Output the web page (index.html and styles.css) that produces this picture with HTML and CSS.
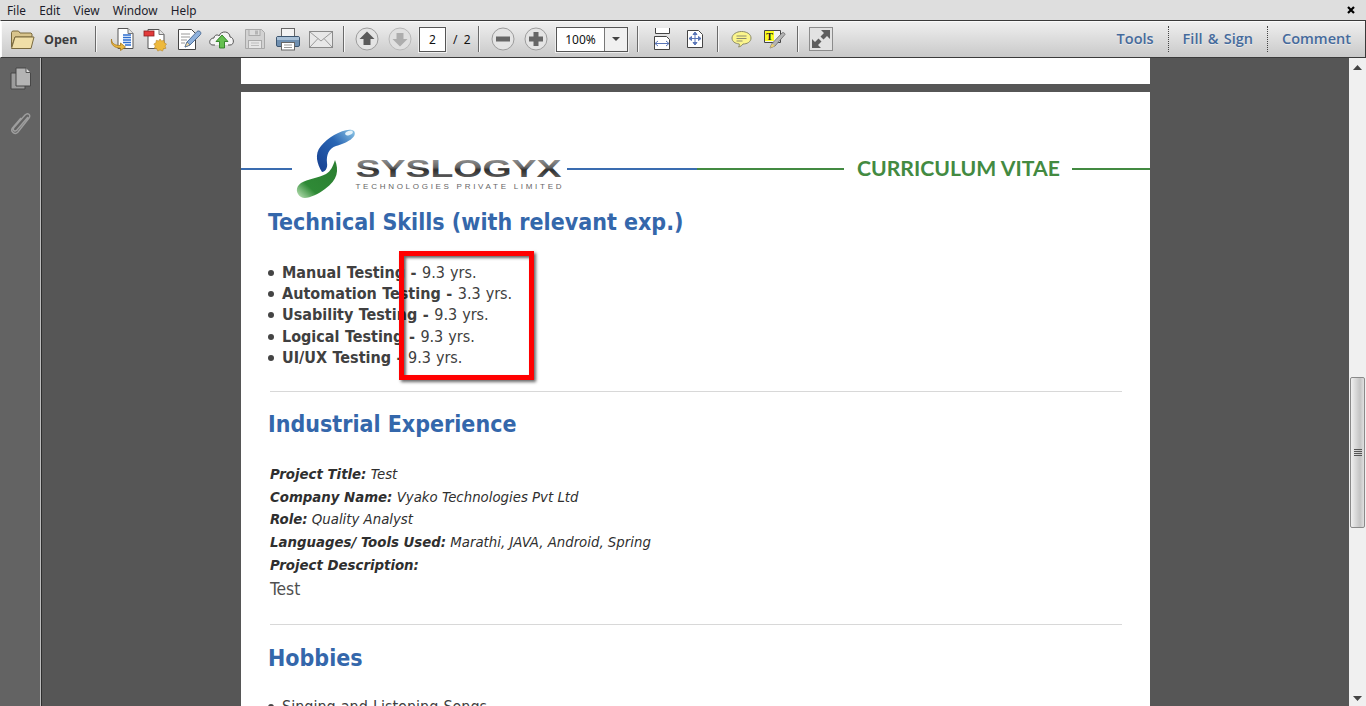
FILE: index.html
```html
<!DOCTYPE html>
<html lang="en">
<head>
<meta charset="utf-8">
<title>Curriculum Vitae</title>
<link rel="stylesheet" href="styles.css">
</head>
<body>
<div class="app">
  <nav class="menubar">
    <span class="menu-item">File</span><span class="menu-item">Edit</span><span class="menu-item">View</span><span class="menu-item">Window</span><span class="menu-item">Help</span>
    <svg class="close-x" viewBox="0 0 8 8" width="8" height="8"><path d="M1 1l6 6M7 1L1 7" stroke="#000" stroke-width="2.2"/></svg>
  </nav>
  <header class="toolbar">
    <div class="tools">
      <svg class="ico folder" width="25" height="21" viewBox="0 0 25 21"><path d="M1.500 18V3.500l1-1.500h6l1.500 2h11l1 1v3H5z" fill="#d8c48c" stroke="#7a6a3e"/><path d="M1.500 19.500L5 8h19l-3 11.500z" fill="#f0dfa8" stroke="#7a6a3e"/></svg>
      <span class="open-label">Open</span>
      <i class="sep sep-open"></i>
      <span class="btn"><svg width="26" height="24" viewBox="0 0 26 24"><path d="M8 1.500h10l5 5v15H8z" fill="#fff" stroke="#555"/><path d="M18 1.500v5h5" fill="#e4e4e4" stroke="#777"/><path d="M13 8h8M13 10.500h8M13 13h8M13 15.500h8M15 18h6" stroke="#2f6fd0" stroke-width="1.300"/><path d="M1.500 12c0 5 4 6.500 9 6.500v-2.500l5 4-5 3.500V21c-6 0-10-3-9-9z" fill="#eab840" stroke="#a9781c" stroke-width=".8"/></svg></span>
      <span class="btn"><svg width="26" height="25" viewBox="0 0 26 25"><path d="M5 2.500h11l5 5v14H5z" fill="#fff" stroke="#555"/><path d="M16 2.500v5h5" fill="#e4e4e4" stroke="#777"/><rect x="1" y="4" width="10" height="5" fill="#e23a3a" stroke="#8c1e1e" stroke-width=".8"/><path d="M17 12l1.500 2 2.500-.7.300 2.500 2.200 1.200-1.500 2 1 2.300-2.500.5-1 2.300-2.500-1.200-2.200 1.200-1-2.300-2.500-.5 1-2.300-1.500-2 2.200-1.200.3-2.500 2.500.7z" fill="#eeb93c" stroke="#b8862a" stroke-width=".6"/></svg></span>
      <span class="btn"><svg width="26" height="24" viewBox="0 0 26 24"><path d="M2.500 2.500h13l4 4v16h-17z" fill="#fff" stroke="#444"/><path d="M5 7h9M5 10h9M5 13h6M5 16h4" stroke="#999"/><path d="M9 20l2-5L21 4.500c1-1 3-.5 3.500.5s.5 2-.5 3L14 18z" fill="#8fb1dc" stroke="#44648e" stroke-width=".9"/><path d="M9 20l2-5 3 3z" fill="#f1d9a4" stroke="#44648e" stroke-width=".6"/></svg></span>
      <span class="btn"><svg width="26" height="22" viewBox="0 0 26 22"><path d="M6 17H4c-5 0-4-7 1-7 0-3 4-4 5-2 2-6 11-5 11 1 4 0 5 8 0 8h-2" fill="#f4f4f4" stroke="#555"/><path d="M13 7l6 6.500h-3.500V20h-5v-6.500H7z" fill="#65c050" stroke="#2c7d24" stroke-width=".9"/></svg></span>
      <span class="btn"><svg width="22" height="22" viewBox="0 0 22 22"><path d="M1.500 1.500h16l3 3v16h-19z" fill="#d2d2d2" stroke="#a8a8a8"/><rect x="5" y="1.500" width="11" height="6" fill="#dcdcdc" stroke="#aaa"/><rect x="11" y="2.500" width="3" height="4" fill="#b5b5b5"/><rect x="4.500" y="12.500" width="13" height="8" fill="#e6e6e6" stroke="#aaa"/><path d="M7 15h8M7 17.500h8" stroke="#bdbdbd"/></svg></span>
      <span class="btn"><svg width="24" height="24" viewBox="0 0 24 24"><rect x="5.500" y="1.500" width="13" height="8" fill="#f3f3f3" stroke="#666"/><path d="M2 9.500h20q1.500 0 1.500 1.500v7q0 1.500-1.500 1.500H2Q.5 19.500.5 18v-7Q.5 9.500 2 9.500z" fill="#6f8fb0" stroke="#3d5670"/><rect x="1" y="10" width="22" height="3" fill="#a9c0d6"/><rect x="5.500" y="15.500" width="13" height="7.500" fill="#fff" stroke="#666"/><path d="M8 18h8M8 20.500h8" stroke="#999"/></svg></span>
      <span class="btn"><svg width="24" height="17" viewBox="0 0 24 17"><rect x=".5" y=".5" width="23" height="16" fill="#e8e8e8" stroke="#8a8a8a"/><path d="M1 1l11 9 11-9M1 16l8-8.500M23 16l-8-8.500" fill="none" stroke="#9a9a9a"/></svg></span>
      <i class="sep sep-nav"></i>
      <span class="btn"><svg width="24" height="24" viewBox="0 0 24 24"><circle cx="12" cy="12" r="11" fill="#e4e4e4" stroke="#9c9c9c"/><path d="M12 4.500l7.500 7.500H15.500v6h-7v-6H4.500z" fill="#5a5a5a"/></svg></span>
      <span class="btn"><svg width="24" height="24" viewBox="0 0 24 24"><circle cx="12" cy="12" r="11" fill="#e0e0e0" stroke="#b8b8b8"/><path d="M12 19.500L4.500 12H8.500V6h7v6h4z" fill="#adadad"/></svg></span>
      <span class="page-input">2</span>
      <span class="page-total">/&nbsp; 2</span>
      <i class="sep sep-page"></i>
      <span class="btn"><svg width="24" height="24" viewBox="0 0 24 24"><circle cx="12" cy="12" r="11" fill="#e4e4e4" stroke="#9c9c9c"/><rect x="5" y="9.500" width="14" height="5" fill="#666"/></svg></span>
      <span class="btn"><svg width="24" height="24" viewBox="0 0 24 24"><circle cx="12" cy="12" r="11" fill="#e4e4e4" stroke="#9c9c9c"/><path d="M9.500 5h5v4.500H19v5h-4.500V19h-5v-4.500H5v-5h4.500z" fill="#666"/></svg></span>
      <span class="zoom-box"><span class="zoom-val">100%</span><span class="zoom-arrow"><svg width="8" height="4" viewBox="0 0 8 4"><path d="M0 0h8L4 4z" fill="#444"/></svg></span></span>
      <i class="sep sep-zoom"></i>
      <span class="btn"><svg width="18" height="22" viewBox="0 0 18 22"><path d="M2.500 0v5.500h14V0" fill="#fff" stroke="#444"/><path d="M1.500 8.500h12l3 3v10h-15z" fill="#fff" stroke="#444"/><path d="M2 15.500h14M2 15.500l3-2.500M2 15.500l3 2.500M16 15.500l-3-2.500M16 15.500l-3 2.500" stroke="#5a76b8" fill="none"/></svg></span>
      <span class="btn"><svg width="18" height="20" viewBox="0 0 18 20"><path d="M1.500 1.500h11l4 4v13h-15z" fill="#fff" stroke="#444"/><path d="M9 3v13M3 9.500h12M9 3L7 5.500h4zM9 16l-2-2.500h4zM3 9.500L5.500 7.500v4zM15 9.500L12.500 7.500v4z" stroke="#5a76b8" fill="#5a76b8"/></svg></span>
      <i class="sep sep-fit"></i>
      <span class="btn"><svg width="21" height="19" viewBox="0 0 21 19"><path d="M10.500 1.500c5 0 9.500 2.500 9.500 6.500s-4 6-8 6c-1 1.500-2.500 2.500-4.500 3 .8-1 1-2 .8-3C4 13.500 1 11.500 1 8s4.500-6.500 9.500-6.500z" fill="#fbf58c" stroke="#8a8a6a"/><path d="M5.500 6h10M5.500 8.500h10M5.500 11h6" stroke="#8d8d70"/></svg></span>
      <span class="btn"><svg width="22" height="20" viewBox="0 0 22 20"><path d="M.5 1.500h16v12H.5z" fill="#f3f3f3" stroke="#444"/><rect x="1" y="2" width="9" height="10" fill="#fcfc20"/><text class="t-glyph" x="5.500" y="10.500">T</text><path d="M6 19l2-4.500L18 4c1-1 3 0 3 1.500L11 17z" fill="#b4b4b4" stroke="#666" stroke-width=".8"/><path d="M6 19l2-4.500 3 2.500z" fill="#e9cd72"/></svg></span>
      <i class="sep sep-last"></i>
      <span class="expand"><svg width="24" height="24" viewBox="0 0 24 24"><rect x=".5" y=".5" width="23" height="23" fill="#e2e2e2" stroke="#8c8c8c" stroke-width="1"/><path d="M12 3h9v9l-3-3-3.500 3.500-3-3L15 6zM12 21H3v-9l3 3 3.500-3.500 3 3L9 18z" fill="#5e5e5e"/></svg></span>
    </div>
    <div class="panes">
      <span class="pane">Tools</span><span class="pane pane-fill">Fill &amp; Sign</span><span class="pane">Comment</span>
    </div>
  </header>
  <div class="work">
    <aside class="side">
      <svg width="22" height="24" viewBox="0 0 22 24"><path d="M1 6h14v16H1z" fill="#9c9c9c" stroke="#474747"/><path d="M6 1h10l4.500 4.500V19H6z" fill="#b4b4b4" stroke="#474747"/><path d="M16 1v4.500h4.500" fill="#ddd" stroke="#555"/></svg>
      <svg class="clip" width="22" height="24" viewBox="0 0 22 24"><path d="M18 5L7 18c-2 2.500-5 0-3-2.500L15 3c3-3 6 0 4 3L8 20c-3 3.500-8-.5-5.500-4L11 6" fill="none" stroke="#9e9e9e" stroke-width="1.400"/></svg>
    </aside>
    <main class="canvas">
      <div class="sheet sheet-prev"></div>
      <article class="sheet sheet-cur">
        <div class="letterhead">
          <i class="rule rule-blue rule-a"></i>
          <svg class="logo" width="275" height="80" viewBox="0 0 275 80">
            <defs>
              <linearGradient id="lb" x1="0" y1="1" x2="1" y2="0"><stop offset="0" stop-color="#163e8f"/><stop offset=".6" stop-color="#2a66b4"/><stop offset="1" stop-color="#8cc6e6"/></linearGradient>
              <linearGradient id="lg" x1="0" y1="1" x2="1" y2="0"><stop offset="0" stop-color="#c2e6bc"/><stop offset=".3" stop-color="#2f8a36"/><stop offset="1" stop-color="#2a7d30"/></linearGradient>
              <linearGradient id="ls" x1="0" y1="0" x2="0" y2="1"><stop offset="0" stop-color="#a8a8a8"/><stop offset=".45" stop-color="#666"/><stop offset=".55" stop-color="#2e2e2e"/><stop offset="1" stop-color="#777"/></linearGradient>
            </defs>
            <path d="M62 9C66 15 55 21 44 24C37 26 34 33 35 41C36 46 33 50 30 50C25 42 22 32 29 24C36 15 55 4 62 9z" fill="url(#lb)"/>
            <ellipse cx="57" cy="11" rx="4" ry="2" fill="#e4f2fa" transform="rotate(-20 57 11)"/>
            <path d="M43 38C47 48 46 58 33 67C25 73 14 78 9 75C4 72 3 65 9 61C15 57 27 56 34 52C39 49 41 44 43 38z" fill="url(#lg)"/>
            <text class="logo-name" x="63.500" y="55" textLength="206" lengthAdjust="spacingAndGlyphs" fill="url(#ls)">SYSLOGYX</text>
            <text class="logo-sub" x="63.500" y="67" textLength="206">TECHNOLOGIES PRIVATE LIMITED</text>
          </svg>
          <i class="rule rule-blue rule-b"></i>
          <i class="rule rule-green rule-c"></i>
          <span class="cv-title">CURRICULUM VITAE</span>
          <i class="rule rule-green rule-d"></i>
        </div>
        <h2 class="h-first">Technical Skills (with relevant exp.)</h2>
        <ul class="skills">
          <li><b>Manual Testing - </b>9.3 yrs.</li>
          <li><b>Automation Testing - </b>3.3 yrs.</li>
          <li><b>Usability Testing - </b>9.3 yrs.</li>
          <li><b>Logical Testing - </b>9.3 yrs.</li>
          <li><b>UI/UX Testing - </b>9.3 yrs.</li>
        </ul>
        <hr class="divider hr-one">
        <h2>Industrial Experience</h2>
        <div class="project">
          <p><b>Project Title:</b> Test</p>
          <p><b>Company Name:</b> Vyako Technologies Pvt Ltd</p>
          <p><b>Role:</b> Quality Analyst</p>
          <p><b>Languages/ Tools Used:</b> Marathi, JAVA, Android, Spring</p>
          <p><b>Project Description:</b></p>
        </div>
        <p class="desc">Test</p>
        <hr class="divider hr-two">
        <h2>Hobbies</h2>
        <ul class="skills hobbies">
          <li>Singing and Listening Songs</li>
        </ul>
        <div class="redbox"></div>
      </article>
    </main>
    <div class="scroll">
      <svg class="arrow" width="9" height="5" viewBox="0 0 9 5"><path d="M0 5L4.500 0 9 5z" fill="#444"/></svg>
      <div class="thumb"><i></i><i></i><i></i><i></i></div>
      <svg class="arrow arrow-down" width="9" height="5" viewBox="0 0 9 5"><path d="M0 0l4.500 5L9 0z" fill="#444"/></svg>
    </div>
  </div>
</div>
</body>
</html>
```
FILE: styles.css
```css
* { box-sizing: border-box; }
html, body { margin: 0; height: 100%; overflow: hidden; }
body { font-family: "DejaVu Sans", sans-serif; background: #dcdcdc; }
.app { width: 1366px; height: 706px; display: flex; flex-direction: column; }

.menubar { height: 20px; flex: none; display: flex; align-items: center; padding-left: 7px; gap: 13.300px; background: #dedede; font: 11.800px "Noto Sans", sans-serif; color: #1c1c2a; }
.close-x { margin-left: auto; margin-right: 11px; }

.toolbar { height: 38px; flex: none; display: flex; justify-content: space-between; align-items: center; border: 1px solid #3a3a3a; border-left: 1px solid #fff; box-shadow: inset 1px 1px 0 #fafafa; background: linear-gradient(#f0f0f0, #c9c9c9); }
.tools { display: flex; align-items: center; padding-left: 9px; }
.ico { display: block; }
.open-label { margin-left: 9px; font: 700 12.500px "Open Sans", sans-serif; color: #3c3c3c; width: 33px; }
.sep { width: 2px; height: 26px; margin: 0 7px; background: linear-gradient(90deg, #6a6a6a 50%, #f6f6f6 50%); display: block; }
.sep-open { margin-left: 18px; margin-right: 9px; }
.sep-nav { margin-left: 6px; margin-right: 5px; }
.btn { width: 33px; display: flex; justify-content: center; align-items: center; }
.page-input { width: 27px; height: 25px; margin-left: 3px; display: flex; align-items: center; justify-content: center; background: #fff; border: 1px solid #555; box-shadow: 0 0 0 1px #eee; font: 12px "Noto Sans", sans-serif; color: #111; }
.page-total { margin-left: 7px; width: 25px; font: 12px "Noto Sans", sans-serif; color: #111; }
.sep-page { margin-left: 0; margin-right: 6px; }
.zoom-box { margin-left: 4px; width: 72px; height: 25px; display: flex; background: #fff; border: 1px solid #555; box-shadow: 0 0 0 1px #eee; font: 12px "Noto Sans", sans-serif; color: #111; }
.zoom-val { flex: 1; display: flex; align-items: center; justify-content: center; border-right: 1px solid #777; }
.zoom-arrow { width: 22px; display: flex; align-items: center; justify-content: center; background: #f0f0f0; }
.sep-zoom { margin-left: 9px; margin-right: 6px; }
.sep-fit { margin-left: 6px; margin-right: 6px; }
.sep-last { margin-left: 6px; margin-right: 7px; }
.expand { margin-left: 3px; display: flex; }
.t-glyph { font: 700 10px "Liberation Serif", serif; text-anchor: middle; fill: #222; }

.panes { display: flex; align-items: center; height: 100%; }
.pane { height: 26px; padding: 0 14px 2px; display: flex; align-items: center; font: 600 14.500px "Open Sans", sans-serif; color: #456a9c; text-shadow: 0 1px 0 rgba(255,255,255,.5); border-left: 1px dotted #444; }
.pane:first-child { border-left: 0; }
.pane-fill { word-spacing: 1.500px; }

.work { flex: 1; display: flex; min-height: 0; }
.side { width: 42px; flex: none; display: flex; flex-direction: column; align-items: center; gap: 21px; padding-top: 9px; background: #636363; border-right: 1px solid #2e2e2e; box-shadow: inset -1px 0 0 #bdbdbd; }
.canvas { flex: 1; min-width: 0; display: flex; flex-direction: column; align-items: center; gap: 8px; overflow: hidden; background: #565656; }
.sheet { width: 909px; flex: none; background: #fff; }
.sheet-prev { height: 26px; }
.sheet-cur { position: relative; height: 800px; padding: 0 28px 0 27px; color: #404040; font-family: "DejaVu Sans Condensed", "DejaVu Sans", sans-serif; font-stretch: condensed; }

.letterhead { height: 118px; margin: 0 -28px 0 -27px; padding-top: 30px; display: flex; align-items: flex-start; }
.logo { flex: none; }
.rule { display: block; height: 2px; margin-top: 46px; flex: none; }
.rule-blue { background: #3a6cb0; }
.rule-green { background: #438a41; }
.rule-a { width: 51px; }
.rule-b { width: 130px; }
.rule-c { width: 147px; }
.rule-d { width: 78px; }
.logo-name { font: 700 24px "Liberation Sans", sans-serif; }
.logo-sub { font: 8px "Liberation Sans", sans-serif; fill: #666; }
.cv-title { margin: 34px 13px 0; width: 202px; font: 700 21.200px/24px Lato, sans-serif; font-stretch: normal; color: #438a41; white-space: nowrap; }

h2 { margin: 0; font-weight: 700; font-size: 23px; line-height: 28px; color: #3467ab; }
.h-first { margin-top: -2px; }
.skills { margin: 26px 0 0; padding: 0; list-style: none; font-size: 16px; line-height: 21.200px; word-spacing: .5px; }
.skills li::before { content: ""; display: inline-block; width: 6px; height: 6px; margin-right: 8px; vertical-align: 2px; border-radius: 50%; background: #444; }
.divider { height: 1px; border: 0; margin: 0 0 0 2px; background: #d8d8d8; }
.hr-one { margin-top: 23px; margin-bottom: 18px; }
.project { margin-top: 24.700px; padding-left: 2px; font-size: 14.800px; line-height: 22.800px; font-style: italic; color: #2f2f2f; }
.project p { margin: 0; }
.desc { margin: 0 0 0 2px; font-size: 17.300px; line-height: 24px; color: #505050; }
.hr-two { margin-top: 23px; margin-bottom: 19px; }
.hobbies { margin-top: 24px; }

.redbox { position: absolute; left: 158px; top: 159px; width: 135px; height: 129px; border: 5px solid #f00; box-shadow: 2px 2px 3px rgba(0,0,0,.6), inset 2px 2px 3px rgba(0,0,0,.6); }

.scroll { width: 17px; flex: none; position: relative; background: #f0f0f0; display: flex; flex-direction: column; align-items: center; padding-top: 7px; }
.arrow { display: block; }
.arrow-down { position: absolute; bottom: 5px; left: 4px; }
.thumb { position: absolute; top: 319px; left: 1px; width: 15px; height: 151px; display: flex; flex-direction: column; justify-content: center; align-items: center; gap: 1px; background: linear-gradient(90deg, #f0f0f0, #d0d0d0 50%, #c4c4c4 70%, #e0e0e0); border: 1px solid #8a8a8a; border-radius: 2px; }
.thumb i { display: block; width: 8px; height: 1px; background: #555; }
```
